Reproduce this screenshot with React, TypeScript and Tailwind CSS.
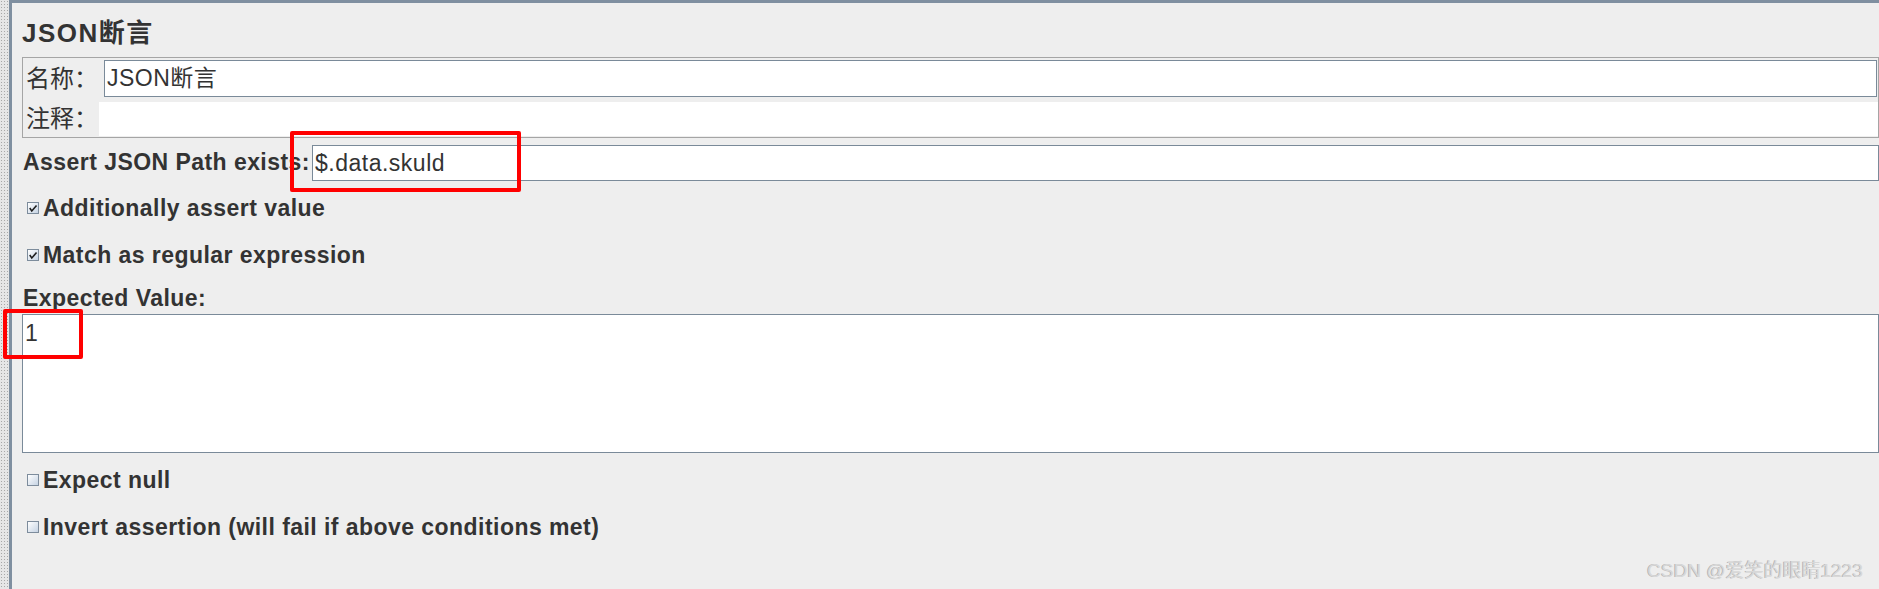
import React from "react";

const FONT = "font-['Liberation_Sans','Noto_Sans_CJK_SC',sans-serif]";

// --- small Metal-style checkbox ---
const Check = ({ checked }: { checked?: boolean }) => (
  <span className="relative w-[12px] h-[12px] shrink-0 border border-[#7d8c9c] bg-gradient-to-br from-white to-[#c6d3e3]">
    {checked && (
      <svg viewBox="0 0 10 10" className="absolute inset-0 w-full h-full">
        <path d="M2.2 5.6 L3.8 8 L8 3.2" fill="none" stroke="#1e1e1e" strokeWidth="1.6" strokeLinecap="square" />
      </svg>
    )}
  </span>
);

const CheckRow = ({ label, checked, className }: { label: string; checked?: boolean; className?: string }) => (
  <div className={`flex items-center h-[26px] pl-[5px] gap-[4px] ${className ?? ""}`}>
    <Check checked={checked} />
    <span className="text-[23px] leading-[26px] tracking-[0.45px] font-bold text-[#333333] whitespace-nowrap">{label}</span>
  </div>
);

export default function App() {
  return (
    <div className={`relative w-[1879px] h-[589px] flex bg-[#eeeeee] overflow-hidden ${FONT}`}>
      {/* dotted splitter + frame edge */}
      <div className="w-[9px] h-full bg-[#e6e6e6] bg-[radial-gradient(circle,#a8a8a8_0.8px,transparent_0.9px)] bg-[length:3px_3px]" />
      <div className="w-[3px] h-full bg-[#7f8fa0]" />

      {/* --- MAIN PANEL --- */}
      <div className="flex-1 flex flex-col border-t-[3px] border-[#7f8fa0] pl-[10px]">
        <h1 className="mt-[16px] h-[28px] text-[26px] leading-[28px] tracking-[1.5px] font-bold text-[#333333] whitespace-nowrap">
          JSON断言
        </h1>

        {/* name / comments box */}
        <div className="mt-[10px] h-[81px] border border-[#a5a5a5] flex flex-col">
          <div className="flex h-[37px] mt-[2px]">
            <span className="w-[81px] pl-[3px] text-[24px] leading-[37px] text-[#333333]">名称：</span>
            <div className="flex-1 mr-[1px] border border-[#7a8a99] bg-white pl-[2px] text-[23px] leading-[35px] tracking-[0.5px] text-[#333333]">
              JSON断言
            </div>
          </div>
          <div className="flex h-[34px] mt-[5px]">
            <span className="w-[76px] pl-[3px] text-[24px] leading-[34px] text-[#333333]">注释：</span>
            <div className="flex-1 bg-white" />
          </div>
        </div>

        {/* json path */}
        <div className="mt-[6px] flex items-center h-[37px]">
          <span className="w-[290px] pl-[1px] text-[23px] tracking-[0.45px] font-bold text-[#333333] whitespace-nowrap">
            Assert JSON Path exists:
          </span>
          <div className="flex-1 h-[36px] border border-[#7a8a99] bg-white pl-[2px] text-[23px] leading-[34px] tracking-[0.5px] text-[#333333]">
            $.data.skuld
          </div>
        </div>

        <CheckRow className="mt-[14px]" checked label="Additionally assert value" />
        <CheckRow className="mt-[21px]" checked label="Match as regular expression" />

        <div className="mt-[17px] h-[26px] pl-[1px] text-[23px] leading-[26px] tracking-[0.45px] font-bold text-[#333333]">
          Expected Value:
        </div>
        <div className="mt-[3px] h-[139px] border border-[#7a8a99] bg-white pl-[2px] pt-[5px] text-[23px] leading-[26px] text-[#333333]">
          1
        </div>

        <CheckRow className="mt-[14px]" label="Expect null" />
        <CheckRow className="mt-[21px]" label="Invert assertion (will fail if above conditions met)" />
      </div>

      {/* annotation boxes */}
      <div className="absolute left-[290px] top-[131px] w-[231px] h-[61px] border-[4px] border-[#ff0000] rounded-[2px] pointer-events-none" />
      <div className="absolute left-[3px] top-[309px] w-[80px] h-[50px] border-[4px] border-[#ff0000] rounded-[2px] pointer-events-none" />

      {/* watermark */}
      <div className="absolute right-[16px] bottom-[7px] text-[19px] leading-[22px] text-[#d8d8d8] [text-shadow:-1px_0_0_#b4b4b4] whitespace-nowrap">
        CSDN @爱笑的眼睛1223
      </div>
    </div>
  );
}
